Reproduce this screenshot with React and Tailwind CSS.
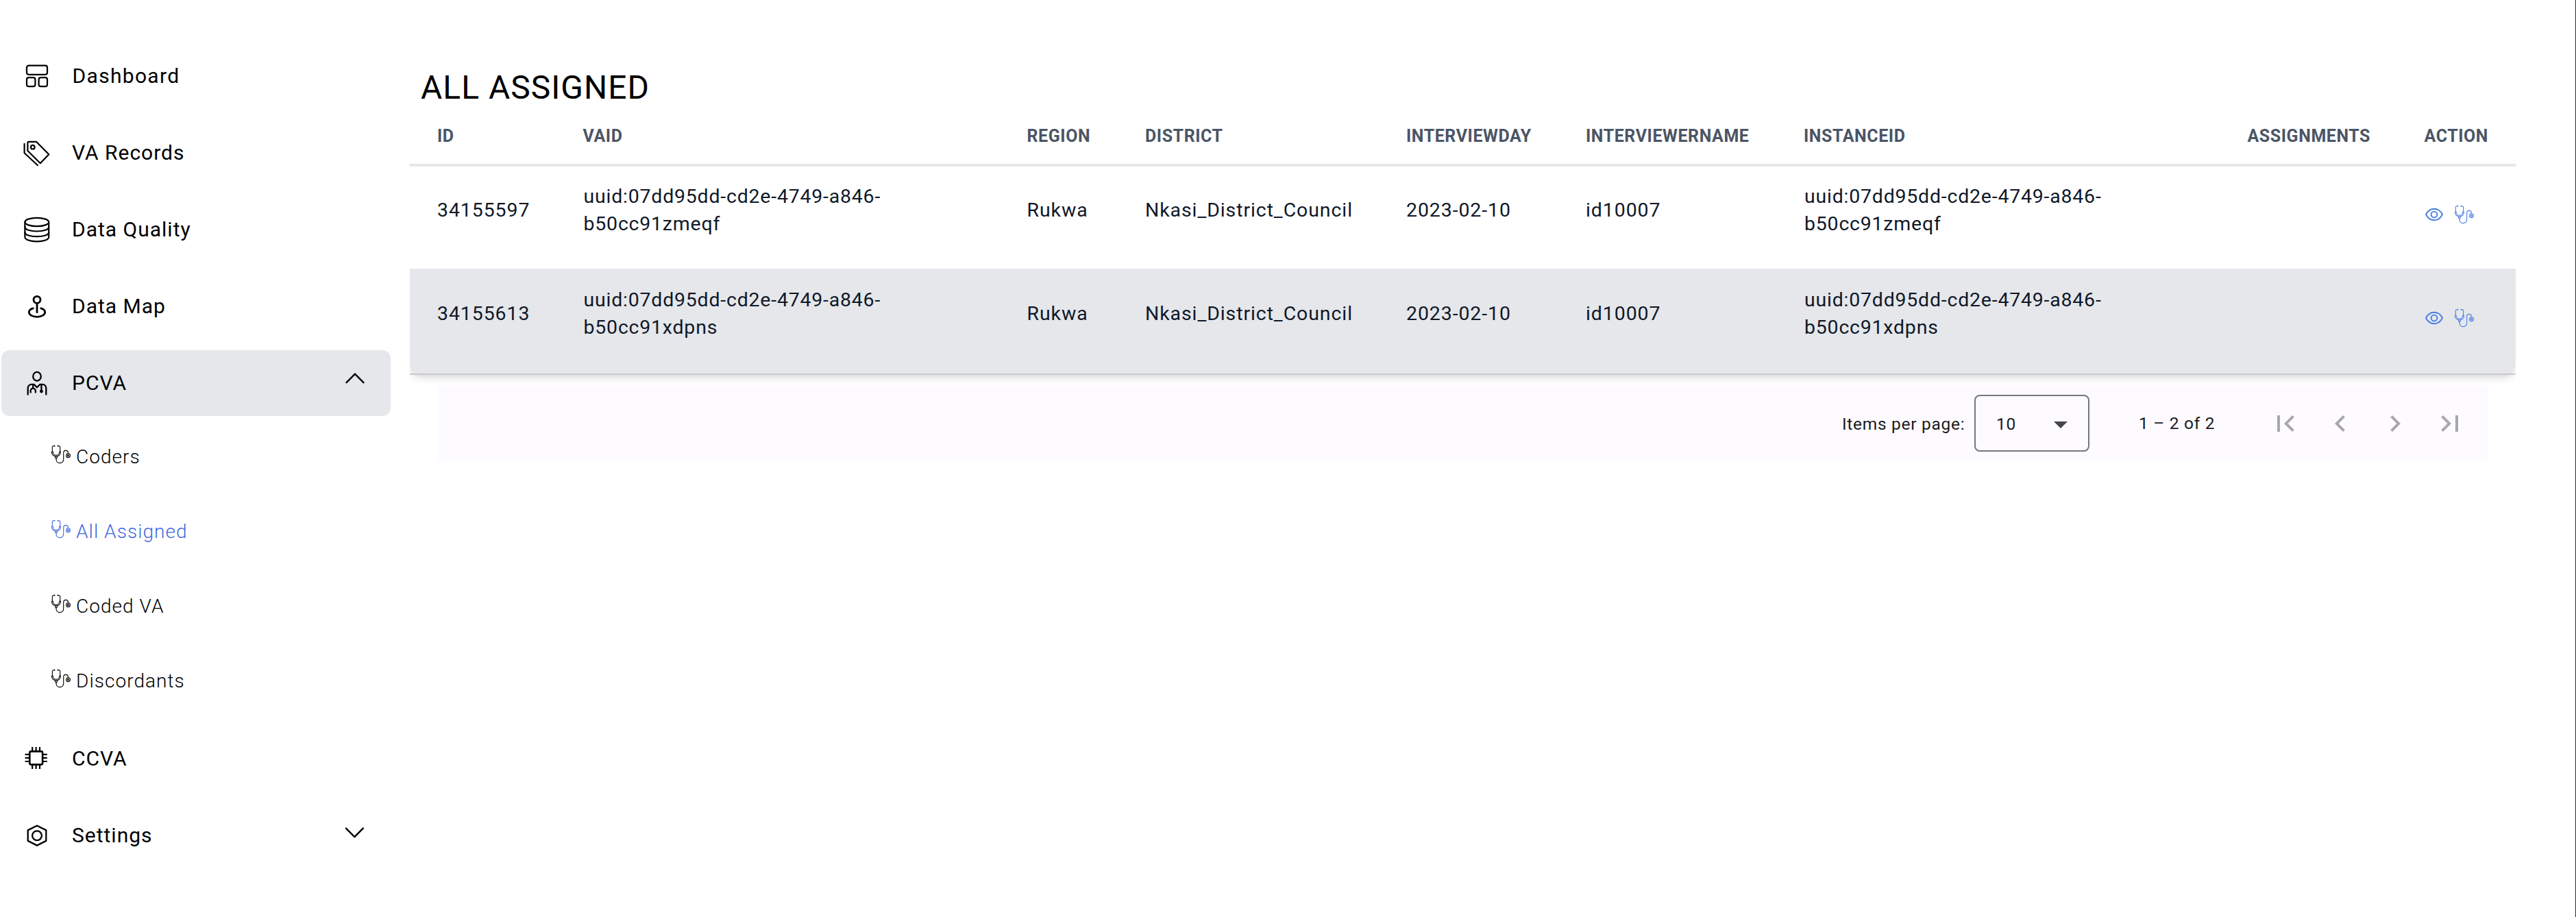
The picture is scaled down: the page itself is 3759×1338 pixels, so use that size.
import React from "react";

function Glyph({ children, width = "2.3" }) {
  return (
    <svg
      className="h-10 w-10 shrink-0"
      viewBox="0 0 40 40"
      fill="none"
      stroke="currentColor"
      strokeWidth={width}
      strokeLinecap="round"
      strokeLinejoin="round"
    >
      {children}
    </svg>
  );
}

const DashboardIcon = () => (
  <Glyph width="2.2">
    <rect x="5" y="4.6" width="30" height="13.2" rx="3" />
    <rect x="5" y="22.2" width="12.4" height="13" rx="3" />
    <rect x="22.6" y="22.2" width="12.4" height="13" rx="3" />
  </Glyph>
);

const TagsIcon = () => (
  <Glyph width="2.2">
    <path d="M7.8 3.9h11.4L37.3 22.3 24.8 35.2 6.4 17V5.3a1.4 1.4 0 0 1 1.4-1.4z" />
    <ellipse cx="13.8" cy="11.7" rx="2.8" ry="2.8" />
    <path d="M1.6 6.8v13.4L21 38.2" />
  </Glyph>
);

const DatabaseIcon = () => (
  <Glyph width="2.2">
    <ellipse cx="19.8" cy="9" rx="17.4" ry="6.2" />
    <path d="M2.4 9v22c0 3.6 7.6 6.3 17.4 6.3s17.4-2.7 17.4-6.3V9" />
    <path d="M2.4 16.3c0 3.6 7.6 6.2 17.4 6.2s17.4-2.6 17.4-6.2" />
    <path d="M2.4 24c0 3.6 7.6 6.2 17.4 6.2S37.2 27.6 37.2 24" />
  </Glyph>
);

const MapPinIcon = () => (
  <Glyph width="2.8">
    <circle cx="20" cy="10.3" r="5" />
    <path d="M20 15.5v13.2" />
    <path d="M14.4 22.8C10.6 23.7 8.3 26 8.3 28.6c0 3.8 5.2 6.7 11.7 6.7s11.7-2.9 11.7-6.7c0-2.6-2.3-4.9-6.1-5.8" />
  </Glyph>
);

const DoctorIcon = () => (
  <Glyph width="2.3">
    <ellipse cx="20" cy="10.3" rx="5.8" ry="6.4" />
    <g strokeLinecap="butt">
      <path d="M6.7 37.4V27.6c0-3.2 2.2-5.7 5.4-5.7h3.5L20 26.3l4.4-4.4h3.5c3.2 0 5.4 2.5 5.4 5.7v9.8" />
      <path d="M14.2 22v5.6M10.6 33.6v-1.7c0-2.4 1.5-4.3 3.6-4.3s3.7 1.9 3.7 4.3v1.7M9.8 33.4h2M16.8 33.4h2M26.4 22v9" />
    </g>
    <circle cx="26.4" cy="32" r="1.3" fill="currentColor" />
  </Glyph>
);

const ChipIcon = () => (
  <Glyph width="2.6">
    <rect x="9.3" y="9.4" width="18.8" height="19.2" rx="2" />
    <path
      strokeLinecap="butt"
      strokeWidth="2.2"
      d="M13.2 3v5.5M18.6 3v5.5M24 3v5.5M13.2 29.5v5.5M18.6 29.5v5.5M24 29.5v5.5M2.6 13.8h6M2.6 18.9h6M2.6 24h6M28.8 13.8h6M28.8 18.9h6M28.8 24h6"
    />
  </Glyph>
);

const NutIcon = () => (
  <Glyph width="2.3">
    <path d="M20 5.7l13.3 6.7v15.5L20 34.6 6.7 27.9V12.4z" />
    <circle cx="20" cy="20.2" r="6.9" />
  </Glyph>
);

function Stethoscope() {
  return (
    <svg
      className="h-7 w-7 shrink-0"
      viewBox="0 0 28 28"
      fill="none"
      stroke="currentColor"
      strokeWidth="1.1"
      strokeLinecap="round"
      strokeLinejoin="round"
    >
      <path d="M4.3 1.7H3C1.9 1.7 1.3 2.4 1.3 3.6v6.6M9.7 1.7H11c1.1 0 1.7.7 1.7 1.9v6.6" />
      <path strokeWidth="1.8" d="M4.2 1.7h.4M9.4 1.7h.4" />
      <path d="M.5 10.2h1.8c0 2.9 2 5.1 4.7 5.1s4.7-2.2 4.7-5.1h1.8c0 4-2.8 6.9-6.5 6.9S.5 14.2.5 10.2z" />
      <path d="M5.7 17.1v1.7l.7.8h1.2l.7-.8v-1.7" />
      <path d="M7 19.6v1.6c0 3 2.2 5.4 5.3 5.4s5.4-2.4 5.4-5.4V12c0-2.2 1.3-3.6 3.3-3.6s3.4 1.4 3.4 3.6v.6" />
      <circle cx="24.5" cy="15.7" r="2.9" />
      <circle cx="24.5" cy="15.7" r="1.1" />
    </svg>
  );
}

function EyeIcon() {
  return (
    <svg
      className="h-5 w-[26px] shrink-0"
      viewBox="0 0 26 20"
      fill="none"
      stroke="currentColor"
      strokeWidth="1.9"
    >
      <path d="M1 10C3.7 4.7 8 1.7 13 1.7S22.3 4.7 25 10c-2.7 5.3-7 8.3-12 8.3S3.7 15.3 1 10z" />
      <circle cx="13" cy="10" r="4.4" />
    </svg>
  );
}

function Chevron({ d, className }) {
  return (
    <svg
      className={"ml-auto h-4 w-7 " + className}
      viewBox="0 0 28 16"
      fill="none"
      stroke="currentColor"
      strokeWidth="2.4"
      strokeLinecap="round"
      strokeLinejoin="round"
    >
      <path d={d} />
    </svg>
  );
}

function NavItem({ icon, label, active, chevron, textClass = "tracking-[1px]" }) {
  return (
    <div
      className={
        "flex h-24 w-[568px] shrink-0 items-center rounded-xl pr-[38px] pl-[31.6px] text-[30px] leading-10 " +
        (active ? "bg-gray-200" : "")
      }
    >
      {icon}
      <span className={"ml-[31.4px] " + textClass}>{label}</span>
      {chevron}
    </div>
  );
}

const subItems = ["Coders", "All Assigned", "Coded VA", "Discordants"];

function Sidebar() {
  return (
    <nav className="flex w-[598px] shrink-0 flex-col pt-[63px] pl-0.5 text-black">
      <div className="flex flex-col gap-4">
        <NavItem icon={<DashboardIcon />} label="Dashboard" textClass="tracking-[1.3px] pl-[0.6px]" />
        <NavItem icon={<TagsIcon />} label="VA Records" />
        <NavItem icon={<DatabaseIcon />} label="Data Quality" />
        <NavItem icon={<MapPinIcon />} label="Data Map" />
        <NavItem
          icon={<DoctorIcon />}
          label="PCVA"
          active
          chevron={<Chevron d="M1.6 14.2 14 1.6 26.4 14.2" className="-mt-[15px]" />}
        />
      </div>
      <div className="mt-[5.5px] mb-[10.5px] flex flex-col">
        {subItems.map((label) => (
          <div
            key={label}
            className={
              "flex h-[109px] items-center gap-2 pl-[73px] text-[28px] leading-10 font-light tracking-[1.05px] " +
              (label === "All Assigned" ? "text-[#4169e1]" : "")
            }
          >
            <span className="-mt-2">
              <Stethoscope />
            </span>
            <span>{label}</span>
          </div>
        ))}
      </div>
      <div className="flex flex-col gap-4">
        <NavItem icon={<ChipIcon />} label="CCVA" />
        <NavItem
          icon={<NutIcon />}
          label="Settings"
          chevron={<Chevron d="M1 1.6 13.4 14.2 25.8 1.6" className="-mt-[9px]" />}
        />
      </div>
    </nav>
  );
}

const headers = [
  "ID",
  "VAID",
  "REGION",
  "DISTRICT",
  "INTERVIEWDAY",
  "INTERVIEWERNAME",
  "INSTANCEID",
  "ASSIGNMENTS",
  "ACTION",
];

const rows = [
  { id: "34155597", suffix: "b50cc91zmeqf" },
  { id: "34155613", suffix: "b50cc91xdpns" },
];

const columns =
  "grid grid-cols-[212.5px_648px_172.5px_381px_262px_318px_647.5px_258px_auto] pl-10";

function Uuid({ suffix }) {
  return (
    <div className="pl-px tracking-[0.78px]">
      uuid:07dd95dd-cd2e-4749-a846-
      <br />
      {suffix}
    </div>
  );
}

function Table() {
  return (
    <div className="h-[403px] w-[3073px] overflow-x-clip">
      <div className="rounded-b-2xl bg-white shadow-[0_8px_14px_-2px_rgba(0,0,0,0.13),0_4px_8px_-4px_rgba(0,0,0,0.12)]">
        <div
          className={
            columns +
            " h-[84px] items-center border-b-4 border-gray-200 text-[25px] leading-8 font-bold tracking-[0.55px] text-gray-600"
          }
        >
          {headers.map((h) => (
            <div key={h}>{h}</div>
          ))}
        </div>
        {rows.map((row, i) => (
          <div
            key={row.id}
            className={
              columns +
              " items-center text-[28.5px] leading-10 tracking-[0.9px] text-gray-900 " +
              (i === 1 ? "rounded-b-2xl bg-gray-200 pt-[26px] pb-[47px]" : "pt-6 pb-[45px]")
            }
          >
            <div>{row.id}</div>
            <Uuid suffix={row.suffix} />
            <div>Rukwa</div>
            <div>Nkasi_District_Council</div>
            <div>2023-02-10</div>
            <div>id10007</div>
            <Uuid suffix={row.suffix} />
            <div />
            <div className="flex items-center gap-[17px] pt-3 pl-px text-[#4a7de6]">
              <EyeIcon />
              <Stethoscope />
            </div>
          </div>
        ))}
      </div>
      <div className="relative h-0.5 bg-[#c9c9ce]" />
    </div>
  );
}

const pageIcons = [
  "M18.41 16.59L13.82 12l4.59-4.59L17 6l-6 6 6 6zM6 6h2v12H6z",
  "M15.41 7.41L14 6l-6 6 6 6 1.41-1.41L10.83 12z",
  "M10 6L8.59 7.41 13.17 12l-4.58 4.59L10 18l6-6z",
  "M5.59 7.41L10.18 12l-4.59 4.59L7 18l6-6-6-6zM16 6h2v12h-2z",
];

function Paginator() {
  return (
    <div className="relative mx-10 flex h-[111px] w-[2993px] items-center justify-end bg-[#fdfbff] pr-8 text-[24.5px] leading-8 tracking-[0.7px] text-[#1b1b1f]">
      <div className="w-[193px] pt-0.5">Items per page:</div>
      <div className="flex h-[83px] w-[168px] items-center justify-between rounded-lg border-2 border-[#75777f] pr-[30px] pl-[30px]">
        <span className="pt-0.5">10</span>
        <svg className="mt-[5px] h-2.5 w-5" viewBox="0 0 20 10" fill="#44464f">
          <path d="M0 0h20L10 10z" />
        </svg>
      </div>
      <div className="ml-[72px] w-[190px] pt-px">1 – 2 of 2</div>
      <div className="flex gap-8">
        {pageIcons.map((d) => (
          <svg key={d} className="h-12 w-12" viewBox="0 0 24 24" fill="#a8a7ab">
            <path d={d} />
          </svg>
        ))}
      </div>
    </div>
  );
}

export default function App() {
  return (
    <div className="flex h-[1338px] w-[3759px] overflow-hidden border-r border-[#2a2a2e] bg-white font-[Roboto,sans-serif]">
      <Sidebar />
      <main className="flex flex-col pt-24">
        <h1 className="h-[63px] pl-4 text-[48px] leading-[64px] tracking-[1px] text-black">ALL ASSIGNED</h1>
        <Table />
        <Paginator />
      </main>
    </div>
  );
}
